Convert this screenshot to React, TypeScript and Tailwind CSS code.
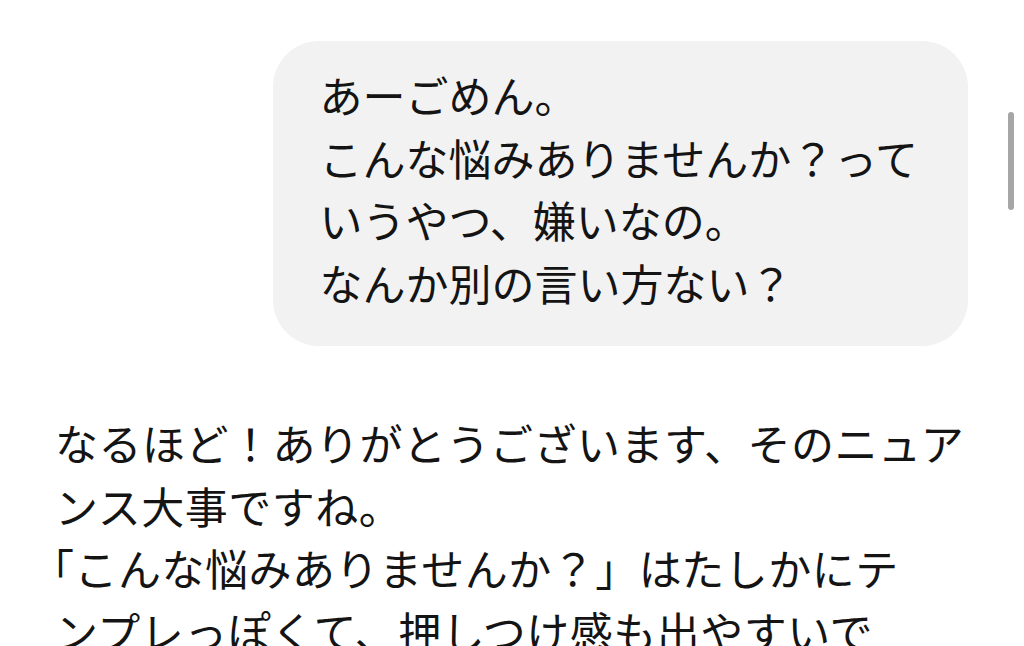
const userLines = [
    "あーごめん。",
    "こんな悩みありませんか？って",
    "いうやつ、嫌いなの。",
    "なんか別の言い方ない？",
]

export default function App() {
    return (
        <div
            className="relative h-[646px] w-[1024px] overflow-hidden bg-white text-[#141414]"
            style={{ fontFamily: '"Noto Sans CJK JP", "Noto Sans", sans-serif' }}
        >
            <div className="flex flex-col pl-[55px] pr-[56px] pt-[41px]">
                {/* user bubble */}
                <div className="flex justify-end">
                    <div className="rounded-[46px] bg-[#f2f2f2] pb-[33px] pl-[46px] pr-[50px] pt-[22px] text-[43px] leading-[62.5px]">
                        {userLines.map(line => (
                            <div key={line}>{line}</div>
                        ))}
                    </div>
                </div>

                {/* assistant reply, broken where the reference breaks */}
                <div className="mt-[65px] text-[43px] leading-[62.5px] tracking-[0.5px]">
                    <div>なるほど！ありがとうございます、そのニュア</div>
                    <div>ンス大事ですね。</div>
                    <div>
                        <span className="ml-[-24px]">「</span>こんな悩みありませんか？」はたしかにテ
                    </div>
                    <div>ンプレっぽくて、押しつけ感も出やすいで</div>
                    <div>すよね。</div>
                </div>
            </div>

            {/* overlay scroll indicator */}
            <div className="absolute right-[10px] top-[112px] h-[98px] w-[6px] rounded-full bg-[#a6a6a6]" />
        </div>
    )
}
